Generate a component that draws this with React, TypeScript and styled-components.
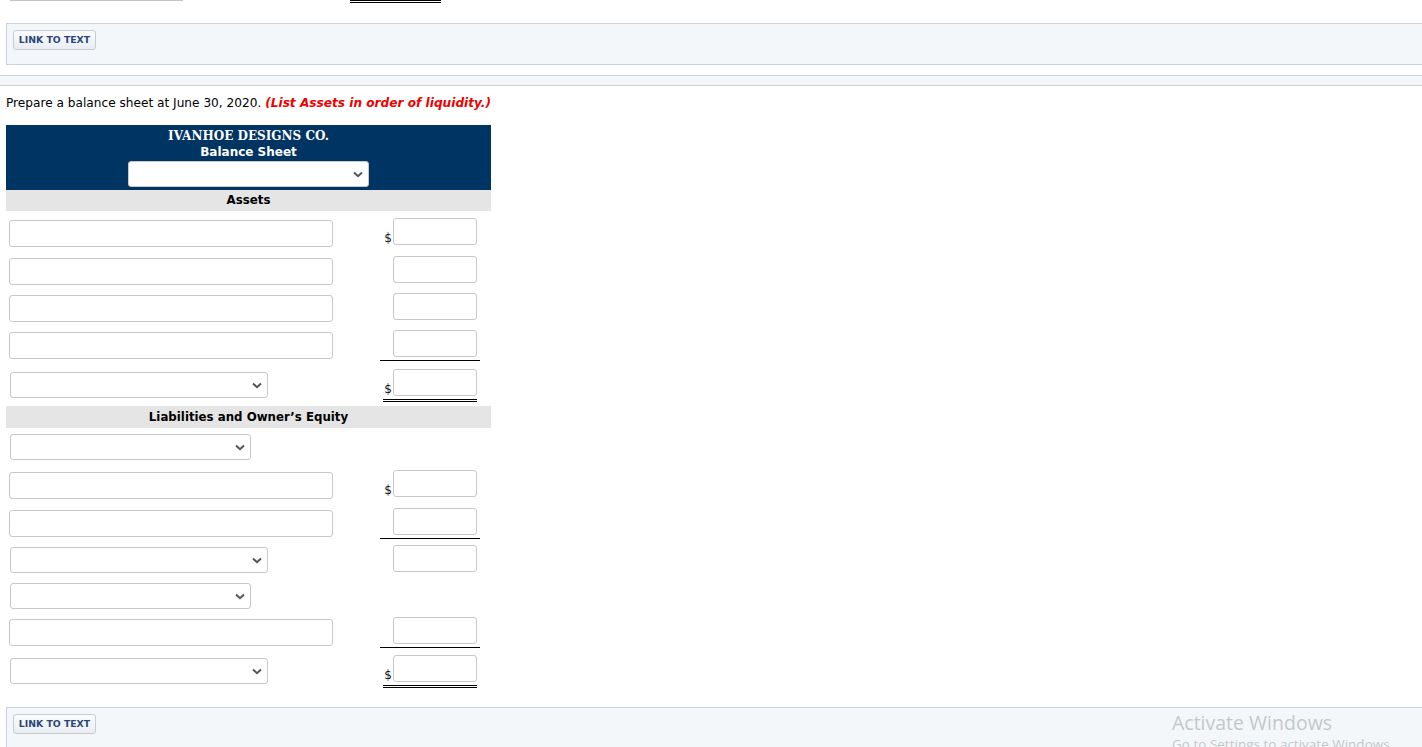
import React from "react";
import styled, { createGlobalStyle, css } from "styled-components";

const GlobalStyle = createGlobalStyle`
  html, body {
    margin: 0;
    padding: 0;
    background: #fff;
    overflow: hidden;
  }
  body {
    font-family: "DejaVu Sans", Verdana, sans-serif;
    font-size: 13px;
    color: #000;
  }
`;

const Page = styled.div`
  width: 1440px;
  height: 747px;
  position: relative;
`;

const Stub = styled.div`
  display: flex;
  height: 3px;
`;

const StubInput = styled.div`
  margin-left: 10px;
  width: 173px;
  height: 1px;
  background: #c4c4c4;
`;

const StubRule = styled.div`
  margin-left: 167px;
  width: 91px;
  height: 0;
  border-bottom: 3px double #000;
`;

const LinkPanel = styled.div<{ $top: number }>`
  margin: ${(p) => p.$top}px 0 0 6px;
  display: flex;
  align-items: flex-start;
  border: 1px solid #c9d1dc;
  background: #f4f7fa;
  padding: 6px 0 0 6px;
  box-sizing: border-box;
  height: 42px;
`;

const LinkButton = styled.button`
  height: 20px;
  width: 83px;
  padding: 0;
  border: 1px solid #c6ccd4;
  border-radius: 3px;
  background: linear-gradient(#fbfcfd, #e9edf2);
  color: #2a4677;
  font-family: "DejaVu Sans", Verdana, sans-serif;
  font-weight: bold;
  font-size: 9.3px;
  line-height: 18px;
  cursor: pointer;
`;

const Divider = styled.div`
  margin-top: 10px;
  height: 9px;
  border-top: 1px solid #c9d1dc;
  border-bottom: 1px solid #c9d1dc;
  background: #f4f7fa;
`;

const Instruction = styled.p`
  margin: 10px 0 0 6px;
  line-height: 15px;
  font-size: 12.15px;
`;

const Hint = styled.span`
  color: #ee0000;
  font-weight: bold;
  font-style: italic;
`;

const Sheet = styled.div`
  margin: 14px 0 0 6px;
  width: 485px;
`;

const SheetHead = styled.div`
  background: #003462;
  color: #fff;
  text-align: center;
  padding: 3px 0 3px;
  display: flex;
  flex-direction: column;
  align-items: center;
`;

const Company = styled.div`
  font-family: "DejaVu Serif", "Liberation Serif", serif;
  font-weight: bold;
  font-size: 12px;
  line-height: 16px;
`;

const Statement = styled.div`
  font-weight: bold;
  font-size: 12px;
  line-height: 16px;
`;

const Band = styled.div<{ $h: number }>`
  background: #e5e5e5;
  height: ${(p) => p.$h}px;
  line-height: ${(p) => p.$h}px;
  text-align: center;
  font-weight: bold;
  font-size: 11.8px;
`;

const Section = styled.div<{ $pad?: number }>`
  padding-top: ${(p) => p.$pad ?? 0}px;
`;

const Row = styled.div<{ $h?: number }>`
  display: grid;
  grid-template-columns: 374px 100px 1fr;
  align-items: center;
  height: ${(p) => p.$h ?? 38}px;
`;

const LabelCell = styled.div`
  padding-left: 3px;
  display: flex;
`;

const TextInput = styled.input`
  box-sizing: border-box;
  width: 324px;
  height: 27px;
  border: 1px solid #c8c8c8;
  border-radius: 3px;
  background: #fff;
  font-family: inherit;
  font-size: 13px;
  padding: 0 6px;
  outline: none;
`;

const AmountCell = styled.div<{ $rule: "none" | "single" | "double" }>`
  display: flex;
  justify-content: flex-end;
  align-items: flex-end;
  padding: 0 3px 3px 0;
  ${(p) =>
    p.$rule === "single" &&
    css`
      border-bottom: 1px solid #000;
    `}
  ${(p) =>
    p.$rule === "none" &&
    css`
      border-bottom: 1px solid transparent;
    `}
  ${(p) =>
    p.$rule === "double" &&
    css`
      margin: 0 3px;
      padding-right: 0;
      border-bottom: 3px double #000;
    `}
`;

const Dollar = styled.span`
  font-size: 12px;
  line-height: 14px;
  margin-right: 1px;
  color: #111;
`;

const AmountInput = styled.input`
  box-sizing: border-box;
  width: 84px;
  height: 27px;
  border: 1px solid #c8c8c8;
  border-radius: 3px;
  background: #fff;
  font-family: inherit;
  font-size: 13px;
  padding: 0 4px;
  outline: none;
  text-align: right;
`;

const SelectWrap = styled.div<{ $w: number; $ml?: number; $mt?: number }>`
  position: relative;
  width: ${(p) => p.$w}px;
  margin-left: ${(p) => p.$ml ?? 1}px;
  margin-top: ${(p) => p.$mt ?? 0}px;
`;

const Select = styled.select`
  box-sizing: border-box;
  display: block;
  width: 100%;
  height: 26px;
  border: 1px solid #c8c8c8;
  border-radius: 3px;
  background: #fff;
  appearance: none;
  font-family: inherit;
  font-size: 13px;
  outline: none;
`;

const Chevron = styled.svg`
  position: absolute;
  right: 6px;
  top: 10px;
  pointer-events: none;
`;

const Watermark = styled.div`
  position: absolute;
  left: 1172px;
  top: 710px;
  color: #c4c7ca;
  font-family: "Open Sans", "Noto Sans", sans-serif;
  pointer-events: none;
`;

const WmTitle = styled.div`
  font-size: 19.5px;
  line-height: 26px;
`;

const WmSub = styled.div`
  font-size: 13.5px;
  line-height: 18px;
  margin-top: -1px;
  white-space: nowrap;
`;

const Dropdown = ({ w, ml, mt }: { w: number; ml?: number; mt?: number }) => (
  <SelectWrap $w={w} $ml={ml} $mt={mt}>
    <Select defaultValue="">
      <option value=""></option>
    </Select>
    <Chevron width="10" height="7" viewBox="0 0 10 7">
      <path d="M1 1.5 L5 5.2 L9 1.5" fill="none" stroke="#555" strokeWidth="2" />
    </Chevron>
  </SelectWrap>
);

type Rule = "none" | "single" | "double";

const Amount = ({ dollar, rule = "none" }: { dollar?: boolean; rule?: Rule }) => (
  <AmountCell $rule={rule}>
    {dollar && <Dollar>$</Dollar>}
    <AmountInput />
  </AmountCell>
);

const TextRow = ({ dollar, rule, h }: { dollar?: boolean; rule?: Rule; h?: number }) => (
  <Row $h={h}>
    <LabelCell>
      <TextInput />
    </LabelCell>
    <Amount dollar={dollar} rule={rule} />
  </Row>
);

const SelectRow = ({ w, h, amount, dollar, rule }: { w: number; h?: number; amount?: boolean; dollar?: boolean; rule?: Rule }) => (
  <Row $h={h}>
    <LabelCell>
      <Dropdown w={w} />
    </LabelCell>
    {amount && <Amount dollar={dollar} rule={rule} />}
  </Row>
);

export default function App() {
  return (
    <Page>
      <GlobalStyle />
      <Stub>
        <StubInput />
        <StubRule />
      </Stub>
      <LinkPanel $top={20}>
        <LinkButton>LINK TO TEXT</LinkButton>
      </LinkPanel>
      <Divider />
      <Instruction>
        Prepare a balance sheet at June 30, 2020. <Hint>(List Assets in order of liquidity.)</Hint>
      </Instruction>

      <Sheet>
        <SheetHead>
          <Company>IVANHOE DESIGNS CO.</Company>
          <Statement>Balance Sheet</Statement>
          <Dropdown w={241} ml={0} mt={1} />
        </SheetHead>

        <Band $h={21}>Assets</Band>
        <Section $pad={3}>
          <TextRow dollar />
          <TextRow />
          <TextRow h={37} />
          <TextRow h={37} rule="single" />
          <SelectRow w={258} h={42} amount dollar rule="double" />
        </Section>

        <Band $h={22}>Liabilities and Owner’s Equity</Band>
        <Section>
          <SelectRow w={241} />
          <TextRow dollar />
          <TextRow rule="single" />
          <SelectRow w={258} h={36} amount />
          <SelectRow w={241} h={36} />
          <TextRow h={36} rule="single" />
          <SelectRow w={258} h={42} amount dollar rule="double" />
        </Section>
      </Sheet>

      <LinkPanel $top={15}>
        <LinkButton>LINK TO TEXT</LinkButton>
      </LinkPanel>

      <Watermark>
        <WmTitle>Activate Windows</WmTitle>
        <WmSub>Go to Settings to activate Windows.</WmSub>
      </Watermark>
    </Page>
  );
}
